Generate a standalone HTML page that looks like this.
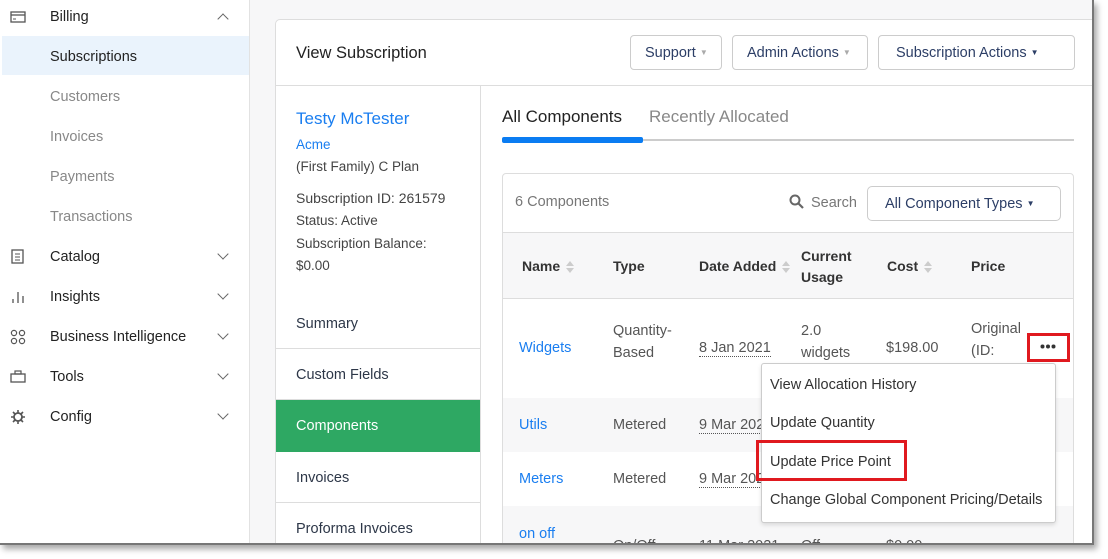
<!DOCTYPE html>
<html><head><style>
*{box-sizing:border-box;margin:0;padding:0}
body{width:1108px;height:559px;background:#fff;font-family:"Liberation Sans",sans-serif;position:relative;overflow:hidden;font-size:14px;color:#2d3748}
.frame{position:absolute;left:0;top:0;width:1094px;height:545px;border:2px solid #777;border-top:none;border-left:none;overflow:hidden;background:#f7f7f8;box-shadow:3px 4px 6px rgba(0,0,0,.35)}
.a{position:absolute;white-space:nowrap}
.side{position:absolute;left:0;top:0;width:250px;height:545px;background:#fff;border-right:1px solid #e2e2e2}
.nav{position:absolute;left:50px;font-size:14.5px;color:#222}
.sub{color:#888}
.chev{position:absolute;left:219px;width:8px;height:8px;border-right:1.5px solid #666;border-bottom:1.5px solid #666;transform:rotate(45deg)}
.card{position:absolute;left:275px;top:19px;width:840px;height:560px;background:#fff;border:1px solid #ddd;border-radius:5px}
.btn{position:absolute;top:15px;height:35px;border:1px solid #ccc;border-radius:4px;background:#fff;font-size:14.5px;color:#2c3e66;padding:9px 0 0 14px}
.ln{position:absolute;height:1px;background:#ddd}
.blue{color:#1a7ef0}
.th{font-weight:bold;font-size:14px;color:#333}
.td{font-size:14.5px;color:#555}
.dot{border-bottom:1px dotted #555}
.sort{display:inline-block;width:8px;height:12px;margin-left:6px;vertical-align:middle;position:relative}
.sort:before,.sort:after{content:"";position:absolute;left:0;border-left:4px solid transparent;border-right:4px solid transparent}
.sort:before{top:0;border-bottom:5px solid #ccc}
.sort:after{bottom:0;border-top:5px solid #ccc}
.menu{position:absolute;left:761px;top:363px;width:295px;height:160px;background:#fff;border:1px solid #ccc;border-radius:3px;box-shadow:0 2px 4px rgba(0,0,0,.12)}
.mi{position:absolute;left:8px;font-size:14.5px;color:#333}
.red{position:absolute;border:3px solid #e0191f}
.car{font-size:8px;color:#aaa;vertical-align:2px}
</style></head><body>
<div class="frame">
<div class="side">
  <svg class="a" style="left:10px;top:11px" width="16" height="12"><rect x="1" y="1" width="14" height="10" fill="none" stroke="#555" stroke-width="1.3"/><line x1="1" y1="4" x2="15" y2="4" stroke="#555" stroke-width="1.3"/><line x1="3" y1="8" x2="6" y2="8" stroke="#555"/></svg>
  <div class="nav" style="top:9px">Billing</div>
  <div class="chev" style="top:15px;transform:rotate(225deg)"></div>
  <div class="a" style="left:2px;top:36px;width:247px;height:39px;background:#eaf3fc"></div>
  <div class="nav" style="top:49px">Subscriptions</div>
  <div class="nav sub" style="top:89px">Customers</div>
  <div class="nav sub" style="top:129px">Invoices</div>
  <div class="nav sub" style="top:169px">Payments</div>
  <div class="nav sub" style="top:209px">Transactions</div>
  <svg class="a" style="left:11px;top:249px" width="13" height="15"><rect x="1" y="1" width="11" height="13" fill="none" stroke="#555" stroke-width="1.3"/><path d="M4 5h5M4 8h5M4 11h5" stroke="#555"/></svg>
  <div class="nav" style="top:249px">Catalog</div><div class="chev" style="top:250px"></div>
  <svg class="a" style="left:11px;top:290px" width="14" height="14"><path d="M2 13V9M7 13V2M12 13V6" stroke="#555" stroke-width="1.3"/></svg>
  <div class="nav" style="top:289px">Insights</div><div class="chev" style="top:290px"></div>
  <svg class="a" style="left:10px;top:329px" width="16" height="16"><circle cx="4" cy="4" r="2.6" fill="none" stroke="#555" stroke-width="1.2"/><circle cx="12" cy="4" r="2.6" fill="none" stroke="#555" stroke-width="1.2"/><circle cx="4" cy="12" r="2.6" fill="none" stroke="#555" stroke-width="1.2"/><circle cx="12" cy="12" r="2.6" fill="none" stroke="#555" stroke-width="1.2"/></svg>
  <div class="nav" style="top:329px">Business Intelligence</div><div class="chev" style="top:330px"></div>
  <svg class="a" style="left:10px;top:369px" width="16" height="14"><rect x="1" y="5" width="14" height="8" fill="none" stroke="#555" stroke-width="1.3"/><rect x="5" y="2" width="6" height="3" fill="none" stroke="#555" stroke-width="1.2"/></svg>
  <div class="nav" style="top:369px">Tools</div><div class="chev" style="top:370px"></div>
  <svg class="a" style="left:10px;top:409px" width="16" height="16"><circle cx="8" cy="8" r="4" fill="none" stroke="#555" stroke-width="1.8"/><path d="M8 1v3M8 12v3M1 8h3M12 8h3M3 3l2 2M11 11l2 2M13 3l-2 2M3 13l2-2" stroke="#555" stroke-width="1.6"/></svg>
  <div class="nav" style="top:409px">Config</div><div class="chev" style="top:410px"></div>
</div>
<div class="card">
  <div class="a" style="left:20px;top:24px;font-size:16.5px;color:#222">View Subscription</div>
  <div class="btn" style="left:354px;width:92px">Support <span class="car">▼</span></div>
  <div class="btn" style="left:456px;width:136px">Admin Actions <span class="car">▼</span></div>
  <div class="btn" style="left:602px;width:197px;padding-left:17px">Subscription Actions <span class="car" style="color:#2c3e66">▼</span></div>
  <div class="ln" style="left:0;top:65px;width:840px"></div>
  <div class="a" style="left:204px;top:65px;width:1px;height:500px;background:#ddd"></div>
  <div class="a blue" style="left:20px;top:89px;font-size:17px">Testy McTester</div>
  <div class="a blue" style="left:20px;top:117px;font-size:13.5px">Acme</div>
  <div class="a td" style="left:20px;top:139px;font-size:13.5px;color:#444">(First Family) C Plan</div>
  <div class="a td" style="left:20px;top:170px;font-size:14px;color:#444">Subscription ID: 261579</div>
  <div class="a td" style="left:20px;top:193px;font-size:13.5px;color:#444">Status: Active</div>
  <div class="a td" style="left:20px;top:216px;font-size:13.5px;color:#444">Subscription Balance:</div>
  <div class="a td" style="left:20px;top:238px;font-size:13.5px;color:#444">$0.00</div>
  <div class="a" style="left:20px;top:296px;font-size:14.5px">Summary</div>
  <div class="ln" style="left:0;top:328px;width:204px"></div>
  <div class="a" style="left:20px;top:347px;font-size:14.5px">Custom Fields</div>
  <div class="ln" style="left:0;top:379px;width:204px"></div>
  <div class="a" style="left:0;top:380px;width:204px;height:52px;background:#2ea863"></div>
  <div class="a" style="left:20px;top:398px;font-size:14.5px;color:#fff">Components</div>
  <div class="a" style="left:20px;top:450px;font-size:14.5px">Invoices</div>
  <div class="ln" style="left:0;top:482px;width:204px"></div>
  <div class="a" style="left:20px;top:501px;font-size:14.5px">Proforma Invoices</div>
  <div class="a" style="left:226px;top:87px;font-size:17px;color:#222">All Components</div>
  <div class="a" style="left:373px;top:87px;font-size:17px;color:#888">Recently Allocated</div>
  <div class="a" style="left:226px;top:119px;width:572px;height:2px;background:#ccc"></div>
  <div class="a" style="left:226px;top:117px;width:141px;height:6px;background:#0a7cf2;border-radius:2px"></div>
  <div class="a" style="left:226px;top:153px;width:572px;height:420px;border:1px solid #ddd;border-radius:4px;background:#fff;overflow:hidden">
    <div class="a" style="left:12px;top:20px;color:#777;font-size:14.5px">6 Components</div>
    <svg class="a" style="left:286px;top:20px" width="15" height="15"><circle cx="6" cy="6" r="4.5" fill="none" stroke="#666" stroke-width="2"/><path d="M9.5 9.5L14 14" stroke="#666" stroke-width="2.2"/></svg>
    <div class="a" style="left:308px;top:21px;color:#777;font-size:14.5px">Search</div>
    <div class="a" style="left:364px;top:12px;width:194px;height:35px;border:1px solid #ccc;border-radius:5px;padding:9px 0 0 17px;font-size:14.5px;color:#2c3e66">All Component Types <span class="car" style="color:#2c3e66">▼</span></div>
    <div class="a" style="left:0;top:58px;width:572px;height:67px;background:#f7f7f8;border-top:1px solid #ddd;border-bottom:1px solid #ddd"></div>
    <div class="a th" style="left:19px;top:84px">Name<span class="sort"></span></div>
    <div class="a th" style="left:110px;top:84px">Type</div>
    <div class="a th" style="left:196px;top:84px">Date Added<span class="sort"></span></div>
    <div class="a th" style="left:298px;top:72px;line-height:21px">Current<br>Usage</div>
    <div class="a th" style="left:384px;top:84px">Cost<span class="sort"></span></div>
    <div class="a th" style="left:468px;top:84px">Price</div>
    <div class="a blue" style="left:16px;top:166px;font-size:14.5px">Widgets</div>
    <div class="a td" style="left:110px;top:146px;line-height:22px">Quantity-<br>Based</div>
    <div class="a td" style="left:196px;top:166px"><span class="dot">8 Jan 2021</span></div>
    <div class="a td" style="left:298px;top:146px;line-height:22px">2.0<br>widgets</div>
    <div class="a td" style="left:383px;top:166px">$198.00</div>
    <div class="a td" style="left:468px;top:144px;line-height:22px">Original<br>(ID:</div>
    <div class="a" style="left:0;top:224px;width:572px;height:54px;background:#f7f7f8"></div>
    <div class="a blue" style="left:16px;top:243px;font-size:14.5px">Utils</div>
    <div class="a td" style="left:110px;top:243px">Metered</div>
    <div class="a td" style="left:196px;top:243px"><span class="dot">9 Mar 2021</span></div>
    <div class="a blue" style="left:16px;top:297px;font-size:14.5px">Meters</div>
    <div class="a td" style="left:110px;top:297px">Metered</div>
    <div class="a td" style="left:196px;top:297px"><span class="dot">9 Mar 2021</span></div>
    <div class="a" style="left:0;top:332px;width:572px;height:60px;background:#f7f7f8"></div>
    <div class="a blue" style="left:16px;top:352px;font-size:14.5px">on off</div>
    <div class="a td" style="left:110px;top:364px">On/Off</div>
    <div class="a td" style="left:196px;top:364px">11 Mar 2021</div>
    <div class="a td" style="left:298px;top:364px">Off</div>
    <div class="a td" style="left:383px;top:364px">$0.00</div>
  </div>
</div>
<div class="red" style="left:1027px;top:333px;width:43px;height:29px"></div>
<svg class="a" style="left:1040px;top:344px" width="16" height="5"><circle cx="2.5" cy="2.5" r="2" fill="#333"/><circle cx="8" cy="2.5" r="2" fill="#333"/><circle cx="13.5" cy="2.5" r="2" fill="#333"/></svg>
<div class="menu">
  <div class="mi" style="top:13px">View Allocation History</div>
  <div class="mi" style="top:51px">Update Quantity</div>
  <div class="mi" style="top:90px">Update Price Point</div>
  <div class="mi" style="top:128px">Change Global Component Pricing/Details</div>
</div>
<div class="red" style="left:756px;top:440px;width:151px;height:41px"></div>
</div>
</body></html>
